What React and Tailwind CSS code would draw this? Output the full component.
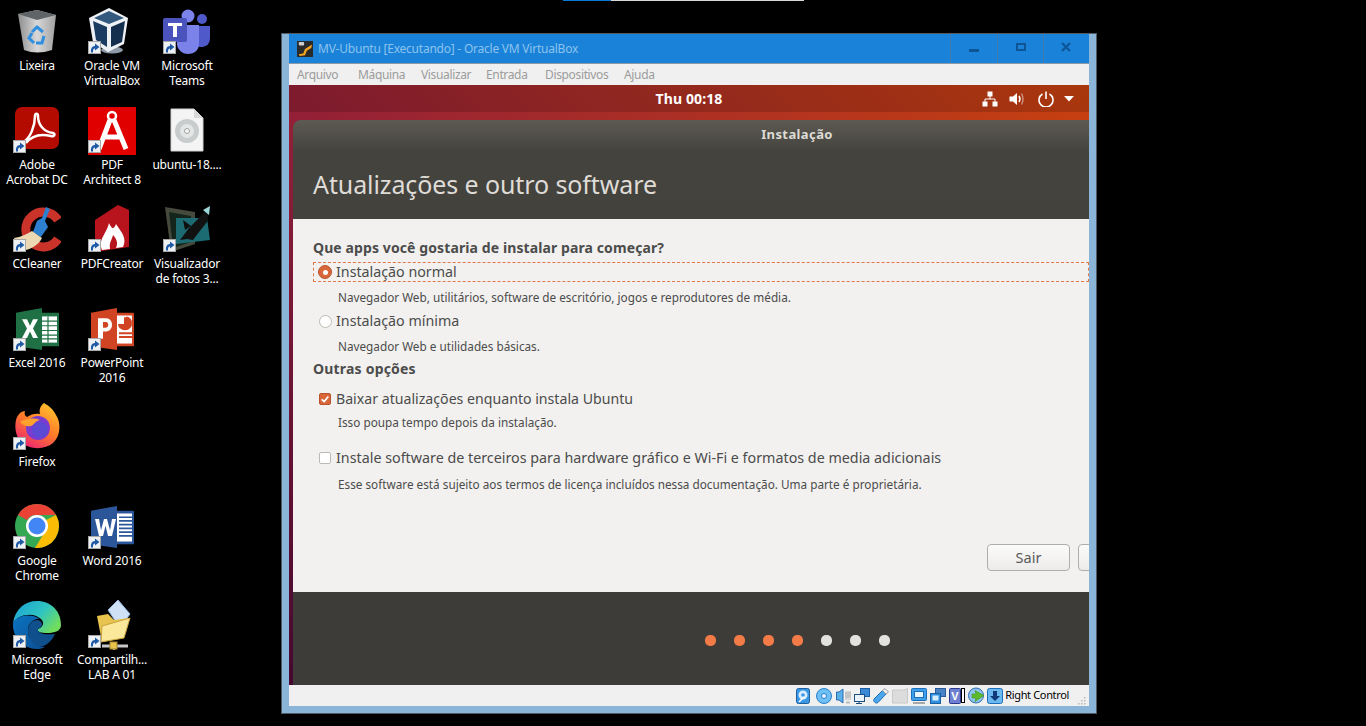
const Shortcut = () => (
  <div className="absolute left-0 bottom-[2px] w-[13px] h-[13px] bg-[#eef1f4] border border-[#a8a8a8] flex items-center justify-center">
    <svg viewBox="0 0 11 11" className="w-[11px] h-[11px]">
      <path d="M2 10.500 C1.500 6 3.500 4 6 4 L6 1.500 L10.500 5 L6 8.500 L6 6.500 C4.500 6.500 3.800 8 4 10.500 Z" fill="#1f5aa6" />
    </svg>
  </div>
);

const Recycle = () => (
  <svg viewBox="0 0 48 48" className="w-12 h-12">
    <defs>
      <linearGradient id="bin" x1="0" x2="1" y1="0" y2="0">
        <stop offset="0" stopColor="#8d8d8d" />
        <stop offset="0.5" stopColor="#d8d8d8" />
        <stop offset="1" stopColor="#a0a0a0" />
      </linearGradient>
    </defs>
    <path d="M5 6 L24 2 L43 7 L39 42 Q24 47 11 42 Z" fill="url(#bin)" />
    <path d="M5 6 L24 2 L43 7 L24 12 Z" fill="#5e6468" />
    <path d="M19 24 L24 19 L30 24 M31 28 L29 35 L23 35 M21 35 L16 30 L19 25" fill="none" stroke="#2f8fe0" strokeWidth="3" />
  </svg>
);

const VBox = () => (
  <svg viewBox="0 0 48 48" className="w-12 h-12">
    <ellipse cx="24" cy="42" rx="11" ry="3.500" fill="#8f9aa8" />
    <path d="M21 0 L40 10 L36 36 L20 44 L5 34 L1 10 Z" fill="#eef2f6" />
    <path d="M21 3 L36 10 L21 16 L6 10 Z" fill="#34597f" />
    <path d="M5 13 L19 19 L19 39 L8 32 Z" fill="#1b3b60" />
    <path d="M23 19 L37 13 L34 34 L23 39 Z" fill="#142e4d" />
  </svg>
);

const Teams = () => (
  <svg viewBox="0 0 48 48" className="w-12 h-12">
    <circle cx="25" cy="8" r="6.500" fill="#7b83eb" />
    <circle cx="39" cy="11" r="5" fill="#5059c9" />
    <path d="M32 18 H47 V30 C47 37 42 39 38 39 C35 39 32 37 32 35 Z" fill="#5059c9" />
    <path d="M14 17 H36 V36 C36 43 30 46 25 46 C19 46 14 41 14 36 Z" fill="#7b83eb" />
    <rect x="0" y="10" width="24" height="24" rx="2" fill="#4b53bc" />
    <path d="M5 15 H19 V18 H14 V29 H10 V18 H5 Z" fill="#fff" />
  </svg>
);

const Acrobat = () => (
  <svg viewBox="0 0 48 48" className="w-12 h-12">
    <rect x="2" y="0" width="44" height="42" rx="7" fill="#b30b00" />
    <path d="M12 34 C17 30 22 20 22 9 C22 6 25 6 25 9 C25 18 31 25 40 26 C43 27 41 30 38 29 C30 27 20 27 13 36" fill="none" stroke="#fff" strokeWidth="2.500" />
  </svg>
);

const Architect = () => (
  <svg viewBox="0 0 48 48" className="w-12 h-12">
    <rect x="0" y="0" width="48" height="48" fill="#e00000" />
    <circle cx="24" cy="9" r="4" fill="none" stroke="#fff" strokeWidth="2.500" />
    <path d="M22 13 L11 42 M26 13 L38 42 M15 30 H33" stroke="#fff" strokeWidth="5" fill="none" />
  </svg>
);

const IsoFile = () => (
  <svg viewBox="0 0 48 48" className="w-12 h-12">
    <path d="M8 2 H31 L40 11 V44 H8 Z" fill="#f4f4f4" stroke="#d0d0d0" />
    <path d="M31 2 V11 H40 Z" fill="#d8d8d8" />
    <circle cx="24" cy="24" r="12" fill="#c9cccc" />
    <circle cx="24" cy="24" r="7" fill="#e4e6e6" />
    <circle cx="24" cy="24" r="2.500" fill="#f7f7f7" stroke="#a0a0a0" />
  </svg>
);

const CCleaner = () => (
  <svg viewBox="0 0 48 48" className="w-12 h-12">
    <path d="M45 14 A17.500 17.500 0 1 0 45 33" fill="none" stroke="#c9332a" strokeWidth="9" />
    <path d="M33 1 L37 3 L32 15 L35 21 L28 31 L20 26 L24 15 L29 12 Z" fill="#2d7fd0" />
    <path d="M1 32 C8 31 14 28 19 25 L29 32 C26 38 20 42 13 44 C9 43 4 38 1 32 Z" fill="#ecd9b4" />
  </svg>
);

const PdfCreator = () => (
  <svg viewBox="0 0 48 48" className="w-12 h-12 overflow-visible">
    <path d="M7 14 L30 -1 L41 4 V41 L7 46 Z" fill="#b8141e" />
    <path d="M14 44 C10 33 18 29 21 17 C24 24 26 23 28 18 C34 27 39 32 35 41 L28 42 C31 36 27 31 25 29 C24 34 21 36 22 43 Z" fill="#fff" />
  </svg>
);

const Viewer = () => (
  <svg viewBox="0 0 48 48" className="w-12 h-12 overflow-visible">
    <path d="M2 1 L32 6 V38 L8 46 Z" fill="#454a3c" />
    <path d="M6 6 L28 10 V36 L10 42 Z" fill="#14261c" />
    <path d="M13 12 H44 L47 34 L13 38 Z" fill="#1c6a72" />
    <path d="M17 34 L26 22 L34 14 L47 0 L44 16 L36 26 L30 34 L24 33 Z" fill="#111" />
    <path d="M40 4 L47 0 L46 9 Z" fill="#9fd8d8" />
    <path d="M20 14 L28 20 L22 24 Z" fill="#0e0e0e" />
  </svg>
);

const Excel = () => (
  <svg viewBox="0 0 48 48" className="w-12 h-12">
    <g transform="translate(0 3) scale(1 0.935)">
      <rect x="26" y="5" width="20" height="36" rx="1" fill="#1f7145" />
      <path d="M29 9 H44 V37 H29 Z" fill="#fff" />
      <path d="M35 9 V37 M29 14 H44 M29 19 H44 M29 24 H44 M29 29 H44 M29 33 H44" stroke="#1f7145" strokeWidth="1.200" />
      <path d="M3 5 L29 0 V45 L3 41 Z" fill="#1f7145" />
      <path d="M9 12 H14 L17 19 L20 12 H25 L20 22 L25 32 H20 L17 25 L14 32 H9 L14 22 Z" fill="#fff" />
    </g>
  </svg>
);

const Ppt = () => (
  <svg viewBox="0 0 48 48" className="w-12 h-12">
    <g transform="translate(0 3) scale(1 0.935)">
      <rect x="26" y="5" width="20" height="36" rx="1" fill="#d04423" />
      <rect x="29" y="8" width="15" height="30" fill="#fff" />
      <path d="M36 10 A7 7 0 1 1 30 17 H36 Z" fill="#d04423" />
      <path d="M38 9 A7 7 0 0 1 44 15 H38 Z" fill="#d04423" />
      <path d="M31 27 H44 M31 31 H44" stroke="#d04423" strokeWidth="2" />
      <path d="M3 5 L29 0 V45 L3 41 Z" fill="#d04423" />
      <path d="M10 11 H18 C26 11 26 25 18 25 H15 V33 H10 Z M15 15 V21 H18 C21 21 21 15 18 15 Z" fill="#fff" fillRule="evenodd" />
    </g>
  </svg>
);

const Firefox = () => (
  <svg viewBox="0 0 48 48" className="w-12 h-12 overflow-visible">
    <defs>
      <linearGradient id="ffx" x1="0.8" x2="0.2" y1="0" y2="1">
        <stop offset="0" stopColor="#ffc52e" />
        <stop offset="0.5" stopColor="#ff7a2a" />
        <stop offset="1" stopColor="#ec1e78" />
      </linearGradient>
    </defs>
    <g transform="translate(0 -2)">
      <path d="M31 1 C36 4 40 7 43 13 C48 20 48 34 40 41 C32 48 16 48 8 40 C2 34 1 22 4 15 C6 11 9 9 12 9 C11 12 12 14 14 15 C18 12 23 11 27 12 C26 8 27 4 31 1 Z" fill="url(#ffx)" />
      <circle cx="25" cy="26" r="12" fill="#7a3bd0" />
      <circle cx="27" cy="28" r="8" fill="#5c4ad4" />
      <path d="M7 20 C12 17 20 15 27 18 C22 19 21 23 18 24 C13 25 10 23 7 20 Z" fill="#ffa22e" />
    </g>
  </svg>
);

const Chrome = () => (
  <svg viewBox="0 0 48 48" className="w-12 h-12 overflow-visible">
    <g transform="translate(0 -1)">
      <circle cx="24" cy="24" r="22" fill="#34a853" />
      <path d="M24 2 A22 22 0 0 1 43 13 H24 A11 11 0 0 0 14 18 L5 13 A22 22 0 0 1 24 2 Z" fill="#ea4335" />
      <path d="M43 13 A22 22 0 0 1 22 46 L33 28 A11 11 0 0 0 33 18 Z" fill="#fbbc05" />
      <circle cx="24" cy="24" r="11" fill="#fff" />
      <circle cx="24" cy="24" r="8.500" fill="#4285f4" />
    </g>
  </svg>
);

const Word = () => (
  <svg viewBox="0 0 48 48" className="w-12 h-12">
    <g transform="translate(0 3) scale(1 0.935)">
      <rect x="26" y="5" width="20" height="36" rx="1" fill="#2b579a" />
      <rect x="29" y="8" width="15" height="30" fill="#fff" />
      <path d="M31 12 H44 M31 16 H44 M31 20 H44 M31 24 H44 M31 28 H44 M31 32 H44" stroke="#2b579a" strokeWidth="1.800" />
      <path d="M3 5 L29 0 V45 L3 41 Z" fill="#2b579a" />
      <path d="M7 14 H11 L13 26 L16 14 H19 L22 26 L24 14 H28 L24 32 H20 L17.500 21 L15 32 H11 Z" fill="#fff" />
    </g>
  </svg>
);

const Edge = () => (
  <svg viewBox="0 0 48 48" className="w-12 h-12 overflow-visible">
    <defs>
      <linearGradient id="edgeTop" x1="0" x2="1" y1="0" y2="0.6">
        <stop offset="0" stopColor="#1aa0d8" />
        <stop offset="0.6" stopColor="#30c5c0" />
        <stop offset="1" stopColor="#6fdc60" />
      </linearGradient>
      <linearGradient id="edgeLow" x1="0" x2="1" y1="0" y2="1">
        <stop offset="0" stopColor="#0c74c0" />
        <stop offset="1" stopColor="#0b4f94" />
      </linearGradient>
    </defs>
    <g transform="translate(0 -1)">
      <path d="M0 22 C2 8 12 0 24 0 C38 0 48 10 48 24 C48 30 42 32 34 32 C28 32 24 31 25 28 C30 26 32 22 28 18 C20 10 4 14 0 22 Z" fill="url(#edgeTop)" />
      <path d="M0 22 C4 14 18 12 27 18 C22 17 14 22 15 31 C16 39 24 46 32 46 C28 48 26 48 24 48 C10 48 -1 36 0 22 Z" fill="url(#edgeLow)" />
      <path d="M15 30 C15 22 20 19 25 19 C30 21 31 25 25 28 C24 32 30 34 42 33 C38 42 30 47 26 45 C20 43 15 37 15 30 Z" fill="#0e4f8c" />
    </g>
  </svg>
);

const Share = () => (
  <svg viewBox="0 0 48 48" className="w-12 h-12 overflow-visible">
    <path d="M20 8 L30 -2 L42 12 L32 26 Z" fill="#cfe2f5" stroke="#8fb4d8" />
    <path d="M9 14 L20 12 L26 18 L41 16 L36 36 L14 40 Z" fill="#e8c44e" />
    <path d="M14 24 L42 16 L36 36 L13 40 Z" fill="#fbe89a" stroke="#c8a23c" />
    <path d="M26 40 V48" stroke="#b8b8b8" strokeWidth="2.500" />
    <path d="M14 44 H40" stroke="#c8c8c8" strokeWidth="3" />
    <rect x="22" y="40" width="7" height="7" fill="#e8c44e" stroke="#a8862c" />
  </svg>
);

const columns = [
  [
    { name: ['Lixeira'], Icon: Recycle, plain: true },
    { name: ['Adobe', 'Acrobat DC'], Icon: Acrobat },
    { name: ['CCleaner'], Icon: CCleaner },
    { name: ['Excel 2016'], Icon: Excel },
    { name: ['Firefox'], Icon: Firefox },
    { name: ['Google', 'Chrome'], Icon: Chrome },
    { name: ['Microsoft', 'Edge'], Icon: Edge },
  ],
  [
    { name: ['Oracle VM', 'VirtualBox'], Icon: VBox },
    { name: ['PDF', 'Architect 8'], Icon: Architect },
    { name: ['PDFCreator'], Icon: PdfCreator },
    { name: ['PowerPoint', '2016'], Icon: Ppt },
    null,
    { name: ['Word 2016'], Icon: Word },
    { name: ['Compartilh...', 'LAB A 01'], Icon: Share },
  ],
  [
    { name: ['Microsoft', 'Teams'], Icon: Teams },
    { name: ['ubuntu-18....'], Icon: IsoFile, plain: true },
    { name: ['Visualizador', 'de fotos 3...'], Icon: Viewer },
  ],
];

const DesktopIcon = ({ item }) => {
  if (!item) return <div className="h-[99px]" />;
  const { Icon, name, plain } = item;
  return (
    <div className="h-[99px] flex flex-col items-start">
      <div className="relative w-12 h-12 ml-[13px]">
        <Icon />
        {!plain && <Shortcut />}
      </div>
      <div className="mt-[2px] w-full pr-[1px] text-center text-white text-[12px] leading-[15px] whitespace-nowrap font-['Noto_Sans',sans-serif] tracking-[-0.2px]">
        {name.map((line) => (
          <div key={line}>{line}</div>
        ))}
      </div>
    </div>
  );
};

const StatusIcons = () => (
  <div className="flex items-center">
    <svg viewBox="0 0 14 16" className="w-[14px] h-[16px] mr-[6px]">
      <rect x="0.500" y="0.500" width="13" height="15" rx="2" fill="#3a97e4" stroke="#1c5fa0" />
      <circle cx="7" cy="7" r="4.500" fill="#d8ecff" />
      <circle cx="7" cy="7" r="1.800" fill="#3a97e4" />
      <path d="M3 14 L8 9" stroke="#fff" strokeWidth="1.500" />
    </svg>
    <svg viewBox="0 0 16 16" className="w-4 h-4 mr-[4px]">
      <circle cx="8" cy="8" r="7.500" fill="#6cc0f5" stroke="#2a7fc8" />
      <circle cx="8" cy="8" r="2.500" fill="#e8f6ff" stroke="#2a7fc8" />
    </svg>
    <svg viewBox="0 0 16 16" className="w-4 h-4 mr-[2px]">
      <path d="M0.500 4 H3 L7 1 V15 L3 12 H0.500 Z" fill="#5cb0ea" stroke="#2a6fb0" />
      <rect x="9" y="3" width="6" height="9" fill="#d6d6d6" />
      <path d="M9 5 H15 M9 7 H15 M9 9 H15" stroke="#a8a8a8" strokeWidth="0.700" />
      <path d="M10 14.500 H14" stroke="#bdbdbd" strokeWidth="2" />
    </svg>
    <svg viewBox="0 0 16 16" className="w-4 h-4 mr-[3px]">
      <rect x="6.500" y="0.500" width="9" height="8" fill="#3a8ad8" stroke="#1c5fa0" />
      <rect x="0.500" y="6.500" width="10" height="7" fill="#e8f3fc" stroke="#1c4f80" />
      <path d="M5 14 V15.500 M2 15.500 H8" stroke="#1c4f80" />
    </svg>
    <svg viewBox="0 0 16 16" className="w-4 h-4 mr-[3px]">
      <path d="M1 11 L9.500 2.500 L13 6 L5 14.500 C3 16 0 14 1 11 Z" fill="#4ea6ea" stroke="#1f6fb8" />
      <path d="M9.500 2.500 L12 0.500 L15.500 4 L13 6 Z" fill="#eeeeee" stroke="#9a9a9a" />
    </svg>
    <svg viewBox="0 0 16 16" className="w-4 h-4 mr-[3px]">
      <path d="M0.500 2 H12 L15.500 0.500 V15 H0.500 Z" fill="#dcdcdc" stroke="#c8c8c8" />
    </svg>
    <svg viewBox="0 0 16 16" className="w-4 h-4 mr-[3px]">
      <rect x="0.500" y="0.500" width="15" height="12" rx="1" fill="#3fa0ea" stroke="#1c6fb8" />
      <rect x="3.500" y="3.500" width="9" height="6" fill="#e8f6ff" stroke="#1c6fb8" />
      <path d="M2 15 H14" stroke="#a8a8a8" strokeWidth="2" />
    </svg>
    <svg viewBox="0 0 16 16" className="w-4 h-4 mr-[3px]">
      <rect x="5.500" y="0.500" width="10" height="8" fill="#4a82c8" stroke="#2a5a98" />
      <rect x="0.500" y="5.500" width="10" height="10" fill="#2f8fe0" stroke="#1c5fa0" />
      <rect x="2.500" y="7.500" width="6" height="5" fill="#d8ecff" />
    </svg>
    <svg viewBox="0 0 12 16" className="w-[12px] h-4">
      <rect x="0.500" y="0.500" width="11" height="15" rx="1" fill="#6f7fd0" stroke="#2a3a90" />
      <text x="6" y="12" textAnchor="middle" fontSize="11" fontWeight="700" fill="#fff" fontFamily="Liberation Sans">V</text>
    </svg>
    <div className="w-[4px] h-[15px] border border-black bg-white mr-[3px]" />
    <svg viewBox="0 0 17 17" className="w-[17px] h-[17px] mr-[2px]">
      <circle cx="8" cy="8.500" r="7.500" fill="#8fc4ee" stroke="#2a6fb0" />
      <path d="M7 3.500 L16 8.500 L7 14.500 L8 11 H4 V7 H8 Z" fill="#5cbb28" stroke="#3a8a18" strokeWidth="0.500" />
    </svg>
    <svg viewBox="0 0 16 16" className="w-4 h-4">
      <rect x="0.500" y="0.500" width="15" height="15" rx="2" fill="#6cb8f0" stroke="#1c6fb8" />
      <path d="M6 3 H10 V8 H13 L8 13 L3 8 H6 Z" fill="#103a78" />
    </svg>
  </div>
);

const Dots = () => (
  <div className="flex gap-[18px]">
    <div className="w-[11px] h-[11px] rounded-[5px] bg-[#f37b47]" />
    <div className="w-[11px] h-[11px] rounded-[5px] bg-[#f37b47]" />
    <div className="w-[11px] h-[11px] rounded-[5px] bg-[#f37b47]" />
    <div className="w-[11px] h-[11px] rounded-[5px] bg-[#f37b47]" />
    <div className="w-[11px] h-[11px] rounded-[5px] bg-[#e2e2e0]" />
    <div className="w-[11px] h-[11px] rounded-[5px] bg-[#e2e2e0]" />
    <div className="w-[11px] h-[11px] rounded-[5px] bg-[#e2e2e0]" />
  </div>
);

const Installer = () => (
  <div className="ml-[4px] flex-1 min-h-0 flex flex-col rounded-tl-lg overflow-hidden font-['Noto_Sans',sans-serif]">
    <div className="h-[99px] shrink-0 bg-[linear-gradient(#5c5a52,#45433e_32%,#44423d)]">
      <div className="w-[1008px] h-[30px] flex items-center justify-center text-[13px] font-bold text-[#dddbd6] tracking-[0.4px]">
        Instalação
      </div>
      <div className="pl-[20px] mt-[15px] h-[40px] flex items-center text-[25px] text-[#dfdcd7] tracking-[-0.1px]">
        Atualizações e outro software
      </div>
    </div>
    <div className="flex-1 bg-[#f2f1ef] pt-[18px] pl-[20px] flex flex-col text-[#4c4c4c] whitespace-nowrap">
      <div className="h-5 flex items-center text-[14px] font-bold tracking-[0.1px]">Que apps você gostaria de instalar para começar?</div>
      <div className="mt-[5px] h-5 flex items-center border border-dashed border-[#e0784a] pl-[4px]">
        <div className="w-[14px] h-[14px] shrink-0 rounded-full bg-[#d9663a] border border-[#b8532c] flex items-center justify-center mr-[4px]">
          <div className="w-[5px] h-[5px] rounded-full bg-white" />
        </div>
        <span className="text-[14.250px]">Instalação normal</span>
      </div>
      <div className="mt-[6px] h-5 pl-[25px] flex items-center text-[11.750px]">Navegador Web, utilitários, software de escritório, jogos e reprodutores de média.</div>
      <div className="mt-[3px] h-5 flex items-center pl-[6px]">
        <div className="w-[13px] h-[13px] rounded-full bg-white border border-[#bdbab5] mr-[4px]" />
        <span className="text-[14.250px]">Instalação mínima</span>
      </div>
      <div className="mt-[6px] h-5 pl-[25px] flex items-center text-[11.750px]">Navegador Web e utilidades básicas.</div>
      <div className="mt-[1px] h-5 flex items-center text-[14px] font-bold tracking-[0.2px]">Outras opções</div>
      <div className="mt-[11px] h-5 flex items-center pl-[6px]">
        <div className="w-[12px] h-[12px] rounded-[2px] bg-[#d9663a] border border-[#b8532c] flex items-center justify-center mr-[5px]">
          <svg viewBox="0 0 12 12" className="w-[10px] h-[10px]">
            <path d="M2 6.500 L5 9 L10 3" fill="none" stroke="#fff" strokeWidth="2" />
          </svg>
        </div>
        <span className="text-[14.150px]">Baixar atualizações enquanto instala Ubuntu</span>
      </div>
      <div className="mt-[4px] h-5 pl-[25px] flex items-center text-[11.750px]">Isso poupa tempo depois da instalação.</div>
      <div className="mt-[15px] h-5 flex items-center pl-[6px]">
        <div className="w-[12px] h-[12px] rounded-[2px] bg-white border border-[#bdbab5] mr-[5px]" />
        <span className="text-[14.300px]">Instale software de terceiros para hardware gráfico e Wi-Fi e formatos de media adicionais</span>
      </div>
      <div className="mt-[7px] h-5 pl-[25px] flex items-center text-[11.750px]">Esse software está sujeito aos termos de licença incluídos nessa documentação. Uma parte é proprietária.</div>
      <div className="mt-auto mb-[21px] flex gap-[8px] pl-[674px] overflow-hidden">
        <button className="w-[83px] h-[27px] shrink-0 rounded-[4px] border border-[#b0aeaa] bg-[linear-gradient(#fbfbfa,#ecebe9)] text-[14.500px] text-[#5a5a5a]">Sair</button>
        <div className="w-[83px] h-[27px] shrink-0 rounded-[4px] border border-[#b0aeaa] bg-[linear-gradient(#fbfbfa,#ecebe9)]" />
      </div>
    </div>
    <div className="h-[93px] shrink-0 bg-[#3e3c38] flex items-center pl-[412px] pt-[3px]">
      <Dots />
    </div>
  </div>
);

const VmWindow = () => (
  <div className="absolute left-[281px] top-[33px] w-[816px] h-[681px] bg-[#8ab4d8] border border-[#4e5a64] px-[7px] pb-[7px] flex flex-col">
    <div className="h-[29px] shrink-0 bg-[#1a82d8] flex items-center pl-[8px]">
      <svg viewBox="0 0 18 18" className="w-4 h-4 mr-[5px]">
        <rect width="18" height="18" fill="#2a2a2a" />
        <path d="M2 15 L7 14 L9 9 L17 4 L16 8 L11 11 L9 16 L3 17 Z" fill="#f5a623" />
        <rect x="2" y="1" width="6" height="4" rx="1" fill="#cfcfcf" />
      </svg>
      <span className="text-[12px] text-[#8cc3ee] font-['Noto_Sans',sans-serif] tracking-[-0.23px]">MV-Ubuntu [Executando] - Oracle VM VirtualBox</span>
      <div className="ml-auto flex h-full">
        <div className="w-[47px] border-l border-[#3f7cb0] flex items-center justify-center pt-[3px]">
          <div className="w-[10px] h-[3px] bg-[#0d5596]" />
        </div>
        <div className="w-[46px] border-l border-[#3f7cb0] flex items-center justify-center pb-[3px]">
          <div className="w-[10px] h-[8px] border-2 border-[#0d5596]" />
        </div>
        <div className="w-[46px] border-l border-[#3f7cb0] flex items-center justify-center pb-[3px] pr-[1px]">
          <svg viewBox="0 0 10 10" className="w-[10px] h-[10px]">
            <path d="M1 1 L9 9 M9 1 L1 9" stroke="#0d5596" strokeWidth="2.200" />
          </svg>
        </div>
      </div>
    </div>
    <div className="h-[1px] shrink-0 bg-[#8a9aa8]" />
    <div className="h-[21px] shrink-0 bg-[#f0f0f0] flex items-center pl-[8px] text-[12px] text-[#9c9c9c] font-['Noto_Sans',sans-serif] tracking-[-0.35px]">
      <span className="w-[61px]">Arquivo</span>
      <span className="w-[63px]">Máquina</span>
      <span className="w-[65px]">Visualizar</span>
      <span className="w-[59px]">Entrada</span>
      <span className="w-[79px]">Dispositivos</span>
      <span>Ajuda</span>
    </div>
    <div className="h-[600px] shrink-0 flex flex-col overflow-hidden bg-[linear-gradient(45deg,#450830,#921f38_40%,#c8410f)]">
      <div className="h-[27px] shrink-0 bg-black/15 relative flex items-center justify-center">
        <span className="text-[14px] font-bold text-white font-['Noto_Sans',sans-serif] tracking-[0.1px]">Thu 00:18</span>
        <div className="absolute right-[15px] top-0 h-full flex items-center text-white">
          <svg viewBox="0 0 16 16" className="w-4 h-4 mr-[11px]">
            <path d="M5.500 0.500 H10.500 V5.500 H5.500 Z M0.500 10.500 H5.500 V15.500 H0.500 Z M10.500 10.500 H15.500 V15.500 H10.500 Z" fill="#fff" />
            <path d="M8 5 V8 M3 11 V8 H13 V11" stroke="#fff" fill="none" />
          </svg>
          <svg viewBox="0 0 16 16" className="w-4 h-4 mr-[13px]">
            <path d="M0.500 5.500 H4 L8 2 V14 L4 10.500 H0.500 Z" fill="#fff" />
            <path d="M10 5 Q12 8 10 11" stroke="#fff" strokeWidth="1.500" fill="none" />
            <path d="M12.500 2.500 Q15.500 8 12.500 13.500" stroke="#fff" strokeOpacity="0.45" strokeWidth="1.500" fill="none" />
          </svg>
          <svg viewBox="0 0 16 16" className="w-4 h-4 mr-[10px]">
            <path d="M4.500 3 A7 7 0 1 0 11.500 3" stroke="#fff" strokeWidth="1.600" fill="none" />
            <path d="M8 0.500 V8" stroke="#fff" strokeWidth="1.600" />
          </svg>
          <svg viewBox="0 0 10 6" className="w-[10px] h-[6px]">
            <path d="M0 0 H10 L5 5.500 Z" fill="#fff" />
          </svg>
        </div>
      </div>
      <div className="h-[8px] shrink-0" />
      <Installer />
    </div>
    <div className="h-[21px] shrink-0 bg-[#f0f0f0] flex items-center justify-end pr-[20px] relative">
      <StatusIcons />
      <span className="ml-[2px] text-[11px] tracking-[-0.35px] text-black font-['Noto_Sans',sans-serif]">Right Control</span>
      <svg viewBox="0 0 8 8" className="absolute right-[3px] bottom-[1px] w-[8px] h-[8px]">
        <path d="M6 0 H7.500 V1.500 H6 Z M3 3 H4.500 V4.500 H3 Z M6 3 H7.500 V4.500 H6 Z M0 6 H1.500 V7.500 H0 Z M3 6 H4.500 V7.500 H3 Z M6 6 H7.500 V7.500 H6 Z" fill="#b8b8b8" />
      </svg>
    </div>
  </div>
);

export default function App() {
  return (
    <div className="relative w-[1366px] h-[726px] bg-black overflow-hidden">
      <div className="absolute top-0 left-[563px] h-[1px] w-[48px] bg-[#0a78d7]" />
      <div className="absolute top-0 left-[611px] h-[1px] w-[193px] bg-[#d8d8d8]" />
      <div className="flex pt-2">
        {columns.map((col, i) => (
          <div key={i} className="w-[75px] flex flex-col">
            {col.map((item, j) => (
              <DesktopIcon key={j} item={item} />
            ))}
          </div>
        ))}
      </div>
      <VmWindow />
    </div>
  );
}
